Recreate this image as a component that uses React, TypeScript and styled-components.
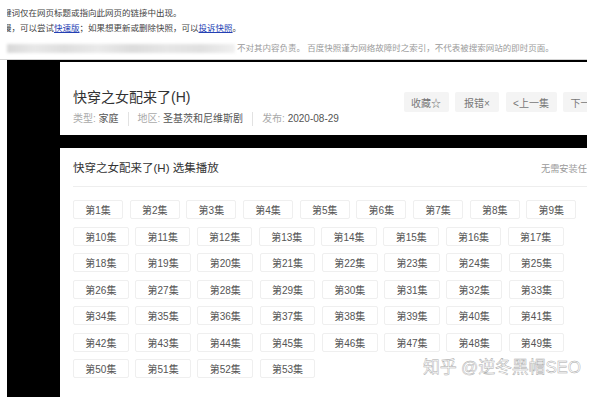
import styled, { createGlobalStyle } from "styled-components";

const GlobalStyle = createGlobalStyle`
  html, body {
    margin: 0;
    padding: 0;
    background: #fff;
    font-family: "Liberation Sans", "Noto Sans CJK SC", sans-serif;
  }
  body {
    width: 600px;
    height: 397px;
    overflow: hidden;
  }
`;

const episodes = Array.from({ length: 53 }, (_, i) => i + 1);

const actions = [
  { label: "收藏☆", width: 45 },
  { label: "报错×", width: 44 },
  { label: "<上一集", width: 51 },
  { label: "下一集>", width: 51 },
];

const App = () => {
  return (
    <Page>
      <GlobalStyle />
      <Notice>
        <NoticeLine>
          <NoticeText>键词仅在网页标题或指向此网页的链接中出现。</NoticeText>
        </NoticeLine>
        <NoticeLine>
          <NoticeText>
            慢，可以尝试<NoticeLink>快速版</NoticeLink>；如果想更新或删除快照，可以
            <NoticeLink>投诉快照</NoticeLink>。
          </NoticeText>
        </NoticeLine>
        <Disclaimer>
          <Blurred />
          <DisclaimerText>
            不对其内容负责。 百度快照谨为网络故障时之索引，不代表被搜索网站的即时页面。
          </DisclaimerText>
        </Disclaimer>
      </Notice>

      <Snapshot>
        <Frame>
          <HeaderCard>
            <TitleBlock>
              <Title>快穿之女配来了(H)</Title>
              <Meta>
                <MetaItem>
                  <MetaLabel>类型:</MetaLabel> 家庭
                </MetaItem>
                <MetaItem>
                  <MetaLabel>地区:</MetaLabel> 圣基茨和尼维斯剧
                </MetaItem>
                <MetaItem>
                  <MetaLabel>发布:</MetaLabel> 2020-08-29
                </MetaItem>
              </Meta>
            </TitleBlock>
            <Actions>
              {actions.map((a) => (
                <ActionButton key={a.label} $w={a.width}>
                  {a.label}
                </ActionButton>
              ))}
            </Actions>
          </HeaderCard>

          <EpisodeCard>
            <EpisodeHead>
              <EpisodeTitle>快穿之女配来了(H) 选集播放</EpisodeTitle>
              <HeadHint>无需安装任何插件，即可快速播放</HeadHint>
            </EpisodeHead>
            <EpisodeGrid>
              {episodes.map((n) => (
                <Episode key={n}>第{n}集</Episode>
              ))}
            </EpisodeGrid>
          </EpisodeCard>
        </Frame>
      </Snapshot>

      <Watermark>知乎 @逆冬黑帽SEO</Watermark>
    </Page>
  );
};

const Page = styled.div`
  position: relative;
  width: 600px;
  height: 397px;
  overflow: hidden;
`;

const Notice = styled.div`
  padding-top: 6px;
  padding-bottom: 3px;
  font-size: 8.5px;
  line-height: 15px;
`;

const NoticeLine = styled.div`
  margin-left: 7px;
  overflow: hidden;
  white-space: nowrap;
  color: #444;
`;

const NoticeText = styled.span`
  display: inline-block;
  margin-left: -4px;
`;

const NoticeLink = styled.a`
  color: #2440b3;
  text-decoration: underline;
`;

const Disclaimer = styled.div`
  display: flex;
  align-items: center;
  margin-top: 5px;
  height: 15px;
  white-space: nowrap;
`;

const Blurred = styled.span`
  display: block;
  margin-left: 7px;
  width: 228px;
  height: 9px;
  background: linear-gradient(
    90deg,
    #d8d8d8 0%,
    #e8e8e8 12%,
    #dedede 25%,
    #eaeaea 40%,
    #dcdcdc 55%,
    #e6e6e6 70%,
    #e0e0e0 85%,
    #f0f0f0 100%
  );
  filter: blur(1.5px);
`;

const DisclaimerText = styled.span`
  margin-left: 2px;
  color: #9a9a9a;
`;

const Snapshot = styled.div`
  width: 580px;
  padding-left: 7px;
  border-top: 1px solid #d4d4d4;
`;

const Frame = styled.div`
  height: 340px;
  background: #000;
  padding: 2px 0 0 53px;
  overflow: hidden;
`;

const HeaderCard = styled.div`
  display: flex;
  align-items: flex-start;
  height: 73px;
  box-sizing: border-box;
  padding: 25px 0 0 13px;
  background: #fff;
  overflow: hidden;
`;

const TitleBlock = styled.div`
  flex: 1;
  min-width: 0;
`;

const Title = styled.div`
  font-size: 14px;
  line-height: 20px;
  color: #333;
`;

const Meta = styled.div`
  display: flex;
  margin-top: 5px;
  font-size: 10px;
  line-height: 14px;
  color: #555;
`;

const MetaItem = styled.span`
  padding: 0 9px;
  border-left: 1px solid #e2e2e2;

  &:first-child {
    padding-left: 0;
    border-left: none;
  }
`;

const MetaLabel = styled.span`
  color: #aaa;
`;

const Actions = styled.div`
  display: flex;
  flex-shrink: 0;
  gap: 6.5px;
  margin: 5px -27px 0 0;
`;

const ActionButton = styled.span<{ $w: number }>`
  display: flex;
  align-items: center;
  justify-content: center;
  width: ${(p) => p.$w}px;
  height: 20px;
  background: #f4f4f4;
  border-radius: 2px;
  font-size: 10px;
  color: #777;
  white-space: nowrap;
`;

const EpisodeCard = styled.div`
  margin-top: 13px;
  height: 260px;
  padding-left: 13px;
  background: #fff;
`;

const EpisodeHead = styled.div`
  display: flex;
  align-items: center;
  padding: 12px 0 10px;
  border-bottom: 1px solid #eee;
`;

const EpisodeTitle = styled.div`
  flex: 1;
  font-size: 11.5px;
  line-height: 16px;
  color: #333;
`;

const HeadHint = styled.div`
  flex: 0 0 46px;
  overflow: hidden;
  white-space: nowrap;
  font-size: 9.2px;
  color: #9a9a9a;
`;

const EpisodeGrid = styled.div`
  display: flex;
  flex-wrap: wrap;
  column-gap: 6.5px;
  row-gap: 7.5px;
  width: 514px;
  margin-top: 13px;
`;

const Episode = styled.span`
  display: inline-flex;
  align-items: center;
  justify-content: center;
  height: 19px;
  box-sizing: border-box;
  padding: 0 11.3px;
  border: 1px solid #efefef;
  border-radius: 2px;
  font-size: 10px;
  color: #555;
  white-space: nowrap;
`;

const Watermark = styled.div`
  position: absolute;
  left: 423px;
  top: 357px;
  font-size: 17px;
  line-height: 22px;
  color: #fff;
  -webkit-text-stroke: 0.45px #a8a8a8;
  white-space: nowrap;
  letter-spacing: -0.2px;
`;

export default App;
